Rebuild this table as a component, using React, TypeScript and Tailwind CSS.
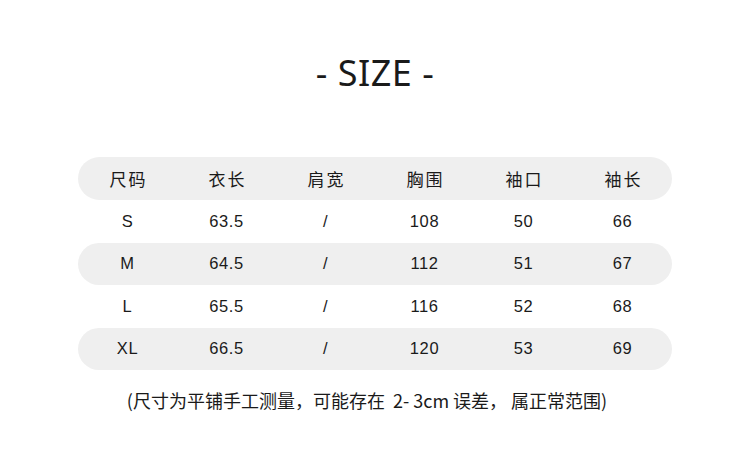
const headers = ['尺码', '衣长', '肩宽', '胸围', '袖口', '袖长'];

const rows = [
  ['S', '63.5', '/', '108', '50', '66'],
  ['M', '64.5', '/', '112', '51', '67'],
  ['L', '65.5', '/', '116', '52', '68'],
  ['XL', '66.5', '/', '120', '53', '69'],
];

export default function App() {
  return (
    <div className="w-[750px] h-[475px] bg-white flex flex-col items-center pt-[51px] text-[#1a1a1a] font-['Liberation_Sans','Noto_Sans_CJK_SC',sans-serif]">
      <div className="h-[44px] leading-[44px] text-[36px] font-['Noto_Sans',sans-serif] tracking-[0.5px]">
        - SIZE -
      </div>

      <div className="mt-[62px] w-[594px] flex flex-col">
        <div className="h-[43px] grid grid-cols-6 items-center bg-[#efefef] rounded-full">
          {headers.map((h) => (
            <div
              key={h}
              className="text-center text-[17px] tracking-[2px] pl-[2px] font-['Noto_Sans_CJK_SC',sans-serif]"
            >
              {h}
            </div>
          ))}
        </div>
        {rows.map((row, i) => (
          <div
            key={row[0]}
            className={
              i % 2 === 1
                ? 'h-[42.5px] grid grid-cols-6 items-center bg-[#efefef] rounded-full'
                : 'h-[42.5px] grid grid-cols-6 items-center'
            }
          >
            {row.map((cell, j) => (
              <div key={j} className="text-center text-[16.5px] tracking-[0.6px]">
                {cell}
              </div>
            ))}
          </div>
        ))}
      </div>

      {/* footnote sits a little left of centre */}
      <div className="mt-[18px] mr-[16px] h-[24px] leading-[24px] text-[18px] font-['Noto_Sans_CJK_SC',sans-serif] whitespace-pre">
        (尺寸为平铺手工测量，可能存在  2- 3cm 误差， 属正常范围)
      </div>
    </div>
  );
}
